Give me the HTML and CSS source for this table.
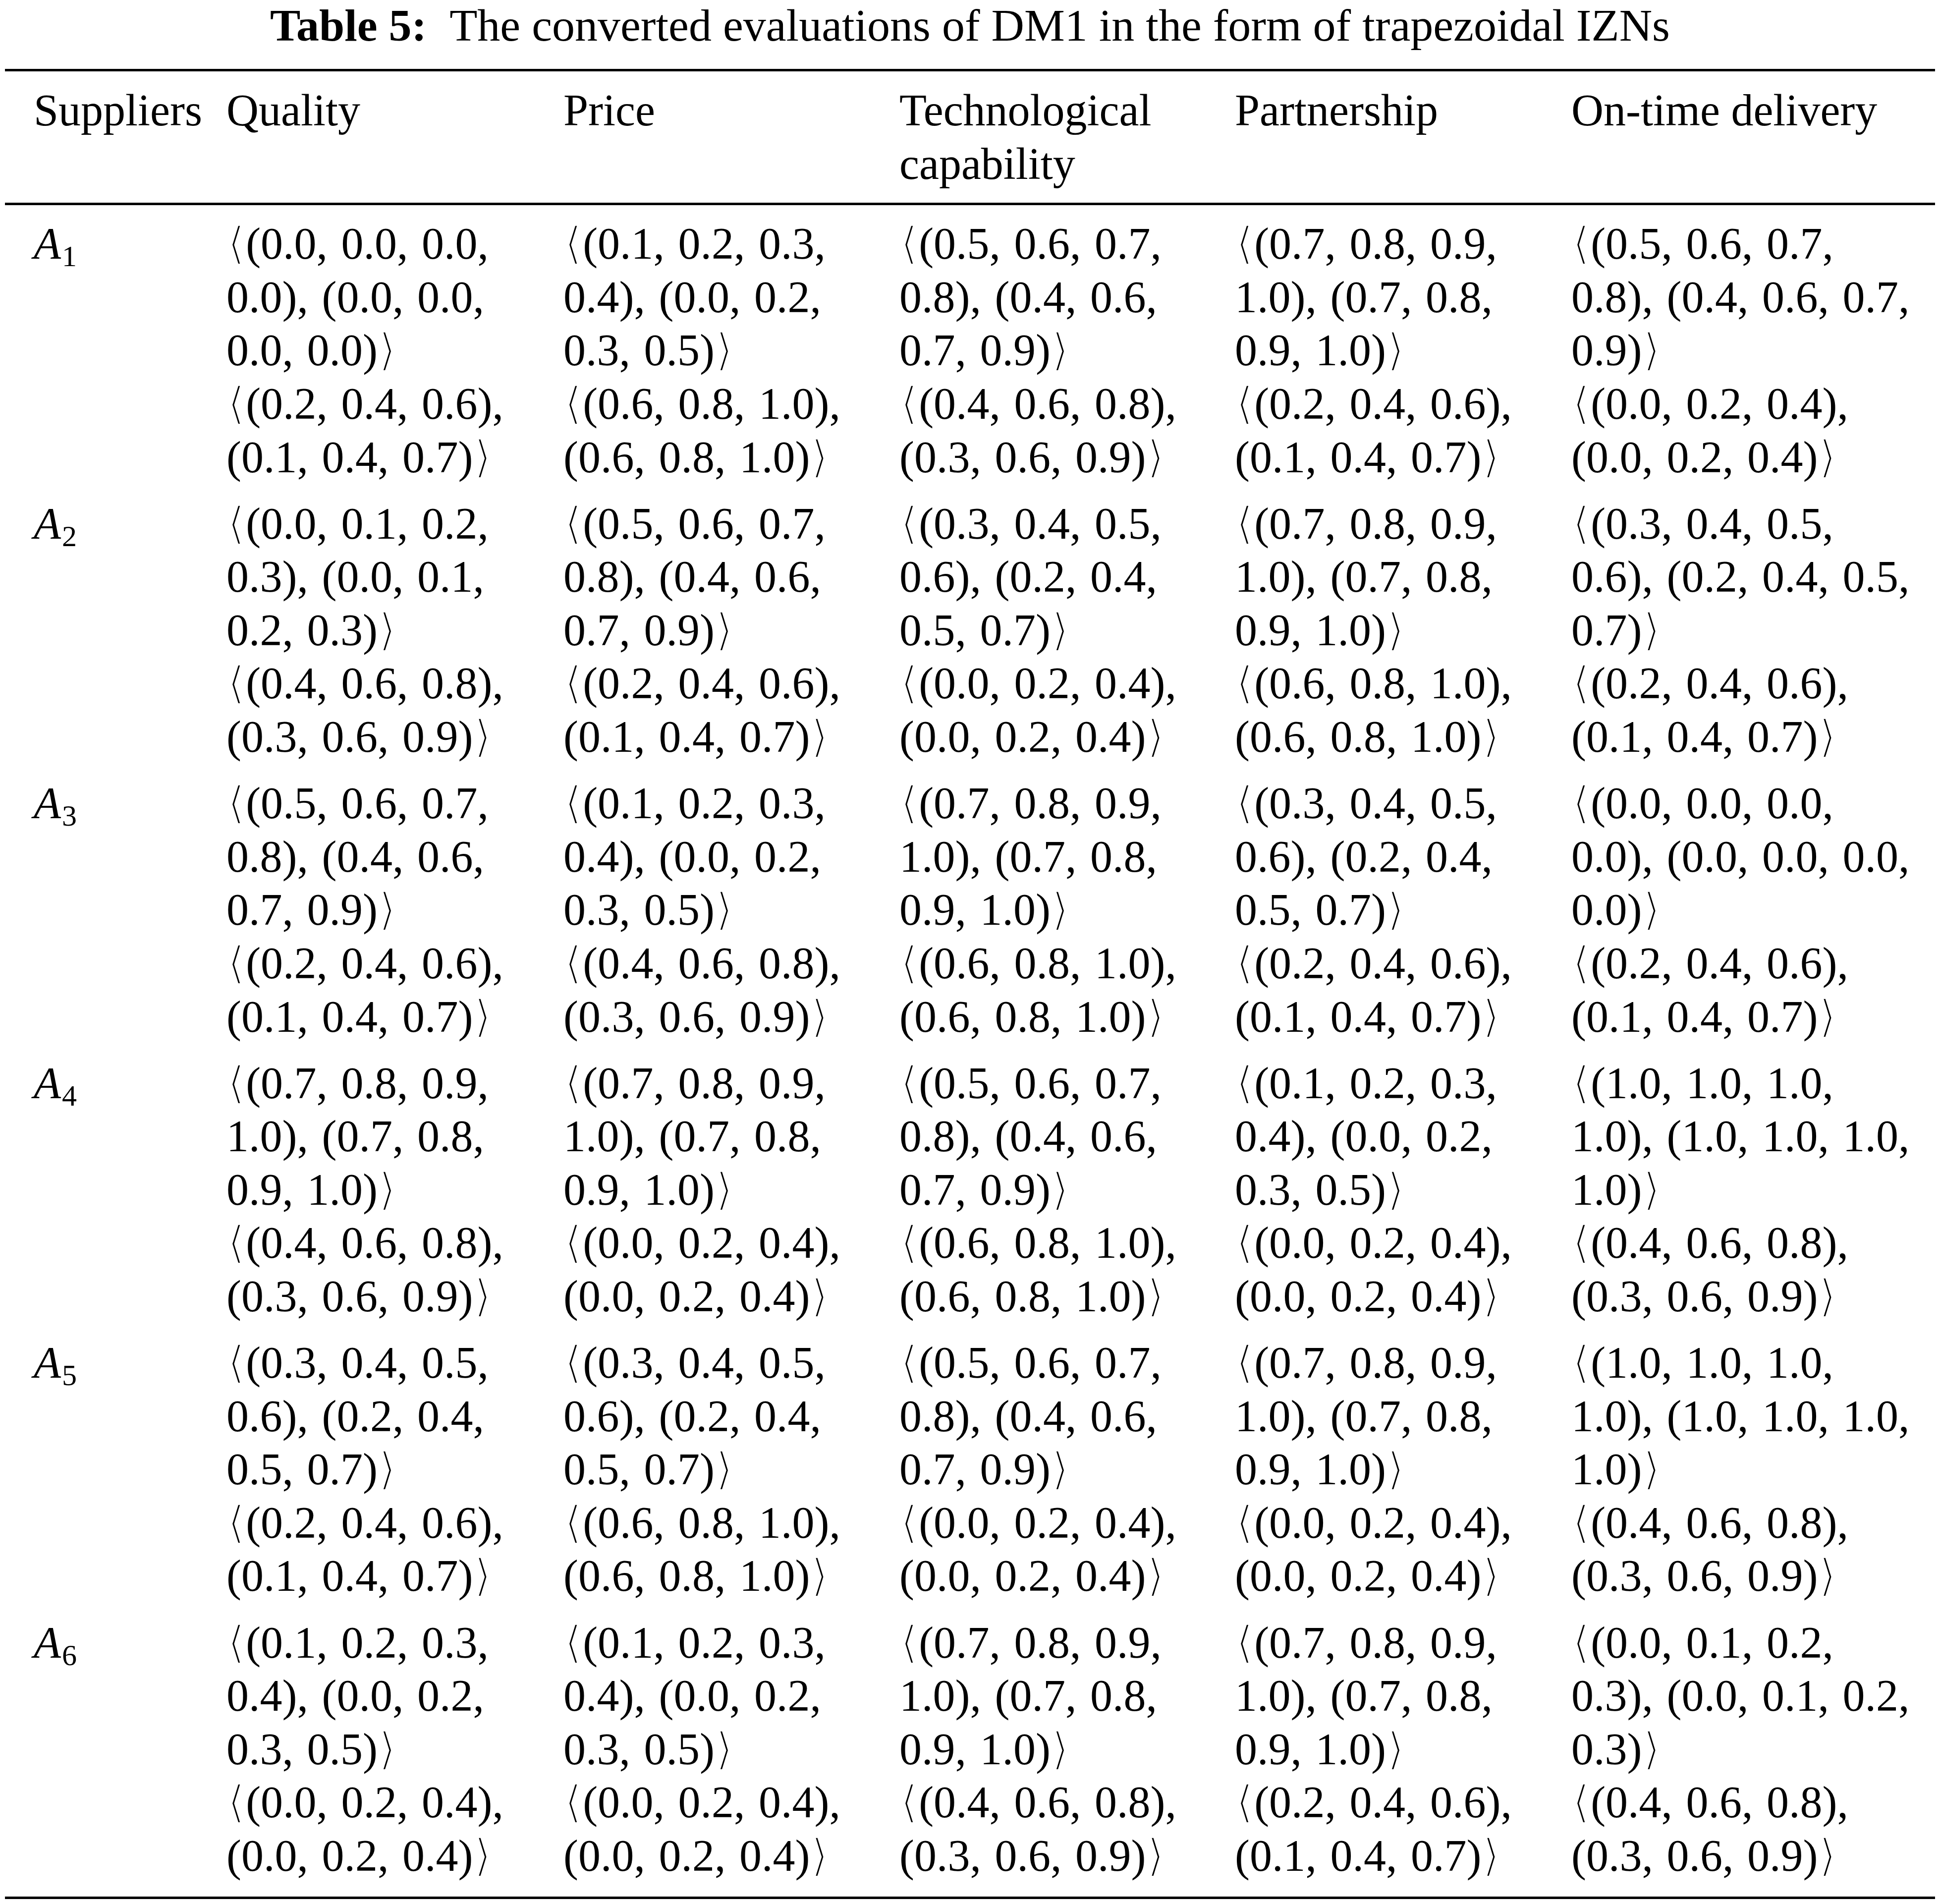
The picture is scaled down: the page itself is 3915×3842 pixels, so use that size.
FILE: index.html
```html
<!DOCTYPE html>
<html lang="en">
<head>
<meta charset="utf-8">
<title>Table 5</title>
<link rel="stylesheet" href="styles.css">
</head>
<body>
<div class="caption"><b>Table 5:</b>&ensp;The converted evaluations of DM1 in the form of trapezoidal IZNs</div>
<div class="table">
  <div class="grid head">
    <div class="c first">Suppliers</div>
    <div class="c">Quality</div>
    <div class="c">Price</div>
    <div class="c">Technological<br>capability</div>
    <div class="c">Partnership</div>
    <div class="c">On-time delivery</div>
  </div>
  <div class="grid body">
    <div class="c first"><i>A</i><sub>1</sub></div>
    <div class="c"><span class="l"><span class="ab">⟨</span>(0.0, 0.0, 0.0,</span><span class="l">0.0), (0.0, 0.0,</span><span class="l">0.0, 0.0)<span class="ab">⟩</span></span><span class="l"><span class="ab">⟨</span>(0.2, 0.4, 0.6),</span><span class="l">(0.1, 0.4, 0.7)<span class="ab">⟩</span></span></div>
    <div class="c"><span class="l"><span class="ab">⟨</span>(0.1, 0.2, 0.3,</span><span class="l">0.4), (0.0, 0.2,</span><span class="l">0.3, 0.5)<span class="ab">⟩</span></span><span class="l"><span class="ab">⟨</span>(0.6, 0.8, 1.0),</span><span class="l">(0.6, 0.8, 1.0)<span class="ab">⟩</span></span></div>
    <div class="c"><span class="l"><span class="ab">⟨</span>(0.5, 0.6, 0.7,</span><span class="l">0.8), (0.4, 0.6,</span><span class="l">0.7, 0.9)<span class="ab">⟩</span></span><span class="l"><span class="ab">⟨</span>(0.4, 0.6, 0.8),</span><span class="l">(0.3, 0.6, 0.9)<span class="ab">⟩</span></span></div>
    <div class="c"><span class="l"><span class="ab">⟨</span>(0.7, 0.8, 0.9,</span><span class="l">1.0), (0.7, 0.8,</span><span class="l">0.9, 1.0)<span class="ab">⟩</span></span><span class="l"><span class="ab">⟨</span>(0.2, 0.4, 0.6),</span><span class="l">(0.1, 0.4, 0.7)<span class="ab">⟩</span></span></div>
    <div class="c"><span class="l"><span class="ab">⟨</span>(0.5, 0.6, 0.7,</span><span class="l">0.8), (0.4, 0.6, 0.7,</span><span class="l">0.9)<span class="ab">⟩</span></span><span class="l"><span class="ab">⟨</span>(0.0, 0.2, 0.4),</span><span class="l">(0.0, 0.2, 0.4)<span class="ab">⟩</span></span></div>

    <div class="c first"><i>A</i><sub>2</sub></div>
    <div class="c"><span class="l"><span class="ab">⟨</span>(0.0, 0.1, 0.2,</span><span class="l">0.3), (0.0, 0.1,</span><span class="l">0.2, 0.3)<span class="ab">⟩</span></span><span class="l"><span class="ab">⟨</span>(0.4, 0.6, 0.8),</span><span class="l">(0.3, 0.6, 0.9)<span class="ab">⟩</span></span></div>
    <div class="c"><span class="l"><span class="ab">⟨</span>(0.5, 0.6, 0.7,</span><span class="l">0.8), (0.4, 0.6,</span><span class="l">0.7, 0.9)<span class="ab">⟩</span></span><span class="l"><span class="ab">⟨</span>(0.2, 0.4, 0.6),</span><span class="l">(0.1, 0.4, 0.7)<span class="ab">⟩</span></span></div>
    <div class="c"><span class="l"><span class="ab">⟨</span>(0.3, 0.4, 0.5,</span><span class="l">0.6), (0.2, 0.4,</span><span class="l">0.5, 0.7)<span class="ab">⟩</span></span><span class="l"><span class="ab">⟨</span>(0.0, 0.2, 0.4),</span><span class="l">(0.0, 0.2, 0.4)<span class="ab">⟩</span></span></div>
    <div class="c"><span class="l"><span class="ab">⟨</span>(0.7, 0.8, 0.9,</span><span class="l">1.0), (0.7, 0.8,</span><span class="l">0.9, 1.0)<span class="ab">⟩</span></span><span class="l"><span class="ab">⟨</span>(0.6, 0.8, 1.0),</span><span class="l">(0.6, 0.8, 1.0)<span class="ab">⟩</span></span></div>
    <div class="c"><span class="l"><span class="ab">⟨</span>(0.3, 0.4, 0.5,</span><span class="l">0.6), (0.2, 0.4, 0.5,</span><span class="l">0.7)<span class="ab">⟩</span></span><span class="l"><span class="ab">⟨</span>(0.2, 0.4, 0.6),</span><span class="l">(0.1, 0.4, 0.7)<span class="ab">⟩</span></span></div>

    <div class="c first"><i>A</i><sub>3</sub></div>
    <div class="c"><span class="l"><span class="ab">⟨</span>(0.5, 0.6, 0.7,</span><span class="l">0.8), (0.4, 0.6,</span><span class="l">0.7, 0.9)<span class="ab">⟩</span></span><span class="l"><span class="ab">⟨</span>(0.2, 0.4, 0.6),</span><span class="l">(0.1, 0.4, 0.7)<span class="ab">⟩</span></span></div>
    <div class="c"><span class="l"><span class="ab">⟨</span>(0.1, 0.2, 0.3,</span><span class="l">0.4), (0.0, 0.2,</span><span class="l">0.3, 0.5)<span class="ab">⟩</span></span><span class="l"><span class="ab">⟨</span>(0.4, 0.6, 0.8),</span><span class="l">(0.3, 0.6, 0.9)<span class="ab">⟩</span></span></div>
    <div class="c"><span class="l"><span class="ab">⟨</span>(0.7, 0.8, 0.9,</span><span class="l">1.0), (0.7, 0.8,</span><span class="l">0.9, 1.0)<span class="ab">⟩</span></span><span class="l"><span class="ab">⟨</span>(0.6, 0.8, 1.0),</span><span class="l">(0.6, 0.8, 1.0)<span class="ab">⟩</span></span></div>
    <div class="c"><span class="l"><span class="ab">⟨</span>(0.3, 0.4, 0.5,</span><span class="l">0.6), (0.2, 0.4,</span><span class="l">0.5, 0.7)<span class="ab">⟩</span></span><span class="l"><span class="ab">⟨</span>(0.2, 0.4, 0.6),</span><span class="l">(0.1, 0.4, 0.7)<span class="ab">⟩</span></span></div>
    <div class="c"><span class="l"><span class="ab">⟨</span>(0.0, 0.0, 0.0,</span><span class="l">0.0), (0.0, 0.0, 0.0,</span><span class="l">0.0)<span class="ab">⟩</span></span><span class="l"><span class="ab">⟨</span>(0.2, 0.4, 0.6),</span><span class="l">(0.1, 0.4, 0.7)<span class="ab">⟩</span></span></div>

    <div class="c first"><i>A</i><sub>4</sub></div>
    <div class="c"><span class="l"><span class="ab">⟨</span>(0.7, 0.8, 0.9,</span><span class="l">1.0), (0.7, 0.8,</span><span class="l">0.9, 1.0)<span class="ab">⟩</span></span><span class="l"><span class="ab">⟨</span>(0.4, 0.6, 0.8),</span><span class="l">(0.3, 0.6, 0.9)<span class="ab">⟩</span></span></div>
    <div class="c"><span class="l"><span class="ab">⟨</span>(0.7, 0.8, 0.9,</span><span class="l">1.0), (0.7, 0.8,</span><span class="l">0.9, 1.0)<span class="ab">⟩</span></span><span class="l"><span class="ab">⟨</span>(0.0, 0.2, 0.4),</span><span class="l">(0.0, 0.2, 0.4)<span class="ab">⟩</span></span></div>
    <div class="c"><span class="l"><span class="ab">⟨</span>(0.5, 0.6, 0.7,</span><span class="l">0.8), (0.4, 0.6,</span><span class="l">0.7, 0.9)<span class="ab">⟩</span></span><span class="l"><span class="ab">⟨</span>(0.6, 0.8, 1.0),</span><span class="l">(0.6, 0.8, 1.0)<span class="ab">⟩</span></span></div>
    <div class="c"><span class="l"><span class="ab">⟨</span>(0.1, 0.2, 0.3,</span><span class="l">0.4), (0.0, 0.2,</span><span class="l">0.3, 0.5)<span class="ab">⟩</span></span><span class="l"><span class="ab">⟨</span>(0.0, 0.2, 0.4),</span><span class="l">(0.0, 0.2, 0.4)<span class="ab">⟩</span></span></div>
    <div class="c"><span class="l"><span class="ab">⟨</span>(1.0, 1.0, 1.0,</span><span class="l">1.0), (1.0, 1.0, 1.0,</span><span class="l">1.0)<span class="ab">⟩</span></span><span class="l"><span class="ab">⟨</span>(0.4, 0.6, 0.8),</span><span class="l">(0.3, 0.6, 0.9)<span class="ab">⟩</span></span></div>

    <div class="c first"><i>A</i><sub>5</sub></div>
    <div class="c"><span class="l"><span class="ab">⟨</span>(0.3, 0.4, 0.5,</span><span class="l">0.6), (0.2, 0.4,</span><span class="l">0.5, 0.7)<span class="ab">⟩</span></span><span class="l"><span class="ab">⟨</span>(0.2, 0.4, 0.6),</span><span class="l">(0.1, 0.4, 0.7)<span class="ab">⟩</span></span></div>
    <div class="c"><span class="l"><span class="ab">⟨</span>(0.3, 0.4, 0.5,</span><span class="l">0.6), (0.2, 0.4,</span><span class="l">0.5, 0.7)<span class="ab">⟩</span></span><span class="l"><span class="ab">⟨</span>(0.6, 0.8, 1.0),</span><span class="l">(0.6, 0.8, 1.0)<span class="ab">⟩</span></span></div>
    <div class="c"><span class="l"><span class="ab">⟨</span>(0.5, 0.6, 0.7,</span><span class="l">0.8), (0.4, 0.6,</span><span class="l">0.7, 0.9)<span class="ab">⟩</span></span><span class="l"><span class="ab">⟨</span>(0.0, 0.2, 0.4),</span><span class="l">(0.0, 0.2, 0.4)<span class="ab">⟩</span></span></div>
    <div class="c"><span class="l"><span class="ab">⟨</span>(0.7, 0.8, 0.9,</span><span class="l">1.0), (0.7, 0.8,</span><span class="l">0.9, 1.0)<span class="ab">⟩</span></span><span class="l"><span class="ab">⟨</span>(0.0, 0.2, 0.4),</span><span class="l">(0.0, 0.2, 0.4)<span class="ab">⟩</span></span></div>
    <div class="c"><span class="l"><span class="ab">⟨</span>(1.0, 1.0, 1.0,</span><span class="l">1.0), (1.0, 1.0, 1.0,</span><span class="l">1.0)<span class="ab">⟩</span></span><span class="l"><span class="ab">⟨</span>(0.4, 0.6, 0.8),</span><span class="l">(0.3, 0.6, 0.9)<span class="ab">⟩</span></span></div>

    <div class="c first"><i>A</i><sub>6</sub></div>
    <div class="c"><span class="l"><span class="ab">⟨</span>(0.1, 0.2, 0.3,</span><span class="l">0.4), (0.0, 0.2,</span><span class="l">0.3, 0.5)<span class="ab">⟩</span></span><span class="l"><span class="ab">⟨</span>(0.0, 0.2, 0.4),</span><span class="l">(0.0, 0.2, 0.4)<span class="ab">⟩</span></span></div>
    <div class="c"><span class="l"><span class="ab">⟨</span>(0.1, 0.2, 0.3,</span><span class="l">0.4), (0.0, 0.2,</span><span class="l">0.3, 0.5)<span class="ab">⟩</span></span><span class="l"><span class="ab">⟨</span>(0.0, 0.2, 0.4),</span><span class="l">(0.0, 0.2, 0.4)<span class="ab">⟩</span></span></div>
    <div class="c"><span class="l"><span class="ab">⟨</span>(0.7, 0.8, 0.9,</span><span class="l">1.0), (0.7, 0.8,</span><span class="l">0.9, 1.0)<span class="ab">⟩</span></span><span class="l"><span class="ab">⟨</span>(0.4, 0.6, 0.8),</span><span class="l">(0.3, 0.6, 0.9)<span class="ab">⟩</span></span></div>
    <div class="c"><span class="l"><span class="ab">⟨</span>(0.7, 0.8, 0.9,</span><span class="l">1.0), (0.7, 0.8,</span><span class="l">0.9, 1.0)<span class="ab">⟩</span></span><span class="l"><span class="ab">⟨</span>(0.2, 0.4, 0.6),</span><span class="l">(0.1, 0.4, 0.7)<span class="ab">⟩</span></span></div>
    <div class="c"><span class="l"><span class="ab">⟨</span>(0.0, 0.1, 0.2,</span><span class="l">0.3), (0.0, 0.1, 0.2,</span><span class="l">0.3)<span class="ab">⟩</span></span><span class="l"><span class="ab">⟨</span>(0.4, 0.6, 0.8),</span><span class="l">(0.3, 0.6, 0.9)<span class="ab">⟩</span></span></div>
  </div>
</div>
</body>
</html>
```
FILE: styles.css
```css
html, body {
  margin: 0;
  padding: 0;
  background: #fff;
}
body {
  width: 3915px;
  color: #000;
  font-family: "Liberation Serif", "DejaVu Serif", serif;
  font-size: 90px;
  line-height: 107.6px;
}
.caption {
  text-align: center;
  font-size: 92px;
  line-height: 100px;
  padding-top: 1px;
}
.caption b {
  font-weight: bold;
}
.table {
  margin: 38px 10px 0;
  border-top: 5px solid #000;
  border-bottom: 5px solid #000;
}
.grid {
  display: grid;
  grid-template-columns: 447px 680px 678px 677px 679px 1fr;
}
.head {
  padding: 25px 0;
  border-bottom: 5px solid #000;
}
.body {
  padding: 24px 0 28.5px;
  row-gap: 26.5px;
}
.body .c {
  word-spacing: 5px;
}
.l {
  display: block;
  white-space: nowrap;
}
.ab {
  word-spacing: 0;
  margin: 0 2px;
  -webkit-text-stroke: 4px #fff;
}
.c.first {
  padding-left: 58px;
}
.c i {
  font-style: italic;
}
.c sub {
  font-size: 60px;
  line-height: 0;
  vertical-align: -15px;
  margin-left: 2px;
}
```
